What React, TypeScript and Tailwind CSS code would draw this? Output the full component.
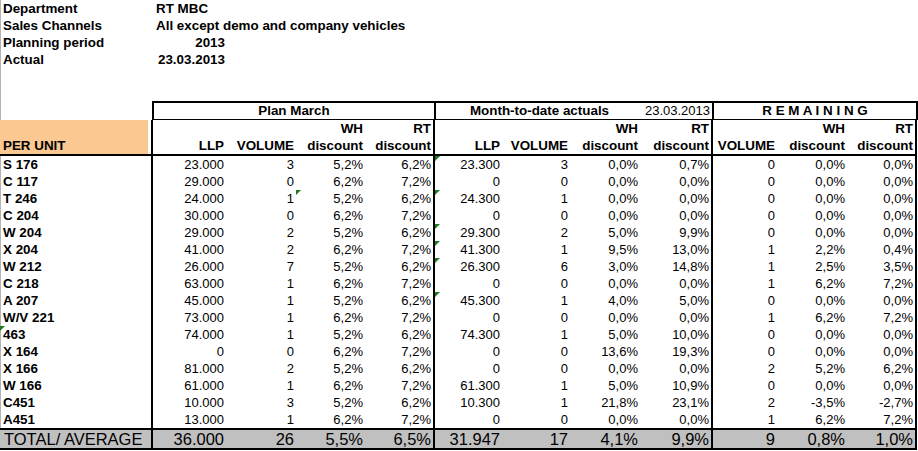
import React from "react";

const COLS =
  "grid grid-cols-[153px_73px_70px_69px_70px_67px_68px_70px_73px_64px_70px_70px] w-[917px]";

const cellBorder = [
  "border-r-2 border-r-black",
  "",
  "",
  "",
  "border-r-2 border-r-black",
  "",
  "",
  "",
  "border-r-2 border-r-black",
  "",
  "",
  "border-r-2 border-r-black",
];

type Row = { label: string; v: string[]; tri?: number[] };

const rows: Row[] = [
  { label: "S 176", v: ["23.000", "3", "5,2%", "6,2%", "23.300", "3", "0,0%", "0,7%", "0", "0,0%", "0,0%"], tri: [5] },
  { label: "C 117", v: ["29.000", "0", "6,2%", "7,2%", "0", "0", "0,0%", "0,0%", "0", "0,0%", "0,0%"] },
  { label: "T 246", v: ["24.000", "1", "5,2%", "6,2%", "24.300", "1", "0,0%", "0,0%", "0", "0,0%", "0,0%"], tri: [3, 5] },
  { label: "C 204", v: ["30.000", "0", "6,2%", "7,2%", "0", "0", "0,0%", "0,0%", "0", "0,0%", "0,0%"] },
  { label: "W 204", v: ["29.000", "2", "5,2%", "6,2%", "29.300", "2", "5,0%", "9,9%", "0", "0,0%", "0,0%"], tri: [5] },
  { label: "X 204", v: ["41.000", "2", "6,2%", "7,2%", "41.300", "1", "9,5%", "13,0%", "1", "2,2%", "0,4%"], tri: [5] },
  { label: "W 212", v: ["26.000", "7", "5,2%", "6,2%", "26.300", "6", "3,0%", "14,8%", "1", "2,5%", "3,5%"], tri: [5] },
  { label: "C 218", v: ["63.000", "1", "6,2%", "7,2%", "0", "0", "0,0%", "0,0%", "1", "6,2%", "7,2%"] },
  { label: "A 207", v: ["45.000", "1", "5,2%", "6,2%", "45.300", "1", "4,0%", "5,0%", "0", "0,0%", "0,0%"], tri: [5] },
  { label: "W/V 221", v: ["73.000", "1", "6,2%", "7,2%", "0", "0", "0,0%", "0,0%", "1", "6,2%", "7,2%"] },
  { label: "463", v: ["74.000", "1", "5,2%", "6,2%", "74.300", "1", "5,0%", "10,0%", "0", "0,0%", "0,0%"], tri: [0] },
  { label: "X 164", v: ["0", "0", "6,2%", "7,2%", "0", "0", "13,6%", "19,3%", "0", "0,0%", "0,0%"] },
  { label: "X 166", v: ["81.000", "2", "5,2%", "6,2%", "0", "0", "0,0%", "0,0%", "2", "5,2%", "6,2%"] },
  { label: "W 166", v: ["61.000", "1", "6,2%", "7,2%", "61.300", "1", "5,0%", "10,9%", "0", "0,0%", "0,0%"] },
  { label: "C451", v: ["10.000", "3", "5,2%", "6,2%", "10.300", "1", "21,8%", "23,1%", "2", "-3,5%", "-2,7%"] },
  { label: "A451", v: ["13.000", "1", "6,2%", "7,2%", "0", "0", "0,0%", "0,0%", "1", "6,2%", "7,2%"] },
];

const total = ["36.000", "26", "5,5%", "6,5%", "31.947", "17", "4,1%", "9,9%", "9", "0,8%", "1,0%"];

function Tri({ left = "left-0" }: { left?: string }) {
  return (
    <span
      className={
        "absolute top-0 w-0 h-0 border-t-[5px] border-r-[5px] border-t-[#1f7a1f] border-r-transparent " + left
      }
    />
  );
}

function InfoRow({ label, value, right }: { label: string; value: string; right?: boolean }) {
  return (
    <div className={COLS + " h-[17px] text-[13.4px]"}>
      <div className="pl-[2px] font-bold leading-[17px] whitespace-nowrap">{label}</div>
      {right ? (
        <div className="text-right pr-[2px] font-bold leading-[17px] whitespace-nowrap">{value}</div>
      ) : (
        <div className="col-span-11 pl-[2px] font-bold leading-[17px] whitespace-nowrap">{value}</div>
      )}
    </div>
  );
}

function HeadCell({ top, bottom, border }: { top?: string; bottom: string; border: string }) {
  return (
    <div className={"flex flex-col justify-end items-end pr-[2px] font-bold text-[13.4px] leading-[17px] " + border}>
      {top ? <div>{top}</div> : null}
      <div>{bottom}</div>
    </div>
  );
}

export default function App() {
  return (
    <div className="w-[918px] h-[451px] bg-white overflow-hidden text-black text-[13px] font-['Liberation_Sans',Arial,sans-serif]">
      <div className="border-l border-l-[#b4b4b4]">
        <InfoRow label="Department" value="RT MBC" />
        <InfoRow label="Sales Channels" value="All except demo and company vehicles" />
        <InfoRow label="Planning period" value="2013" right />
        <InfoRow label="Actual" value="23.03.2013" right />
        <div className="h-[33px]" />
        <div className={COLS + " h-[19px] text-[13.4px]"}>
          <div className="border-r-2 border-r-black" />
          <div className="col-span-4 border-t-2 border-b border-r-2 border-black text-center font-bold leading-[16px]">
            Plan March
          </div>
          <div className="col-span-3 border-t-2 border-b border-black text-center font-bold leading-[16px] pl-[2px]">
            Month-to-date actuals
          </div>
          <div className="border-t-2 border-b border-r-2 border-black text-right pr-[2px] leading-[16px] text-[13px]">
            23.03.2013
          </div>
          <div className="col-span-3 border-t-2 border-b border-r-2 border-black text-center font-bold leading-[16px]">
            R E M A I N I N G
          </div>
        </div>
      </div>

      <div className={COLS + " h-[36px] border-b-2 border-black"}>
        <div className="border-r-2 border-r-black">
          <div className="w-[148px] h-full bg-[#fbc891] flex items-end pl-[3px] font-bold text-[13.4px] leading-[17px]">
            PER UNIT
          </div>
        </div>
        <HeadCell bottom="LLP" border="" />
        <HeadCell bottom="VOLUME" border="" />
        <HeadCell top="WH" bottom="discount" border="" />
        <HeadCell top="RT" bottom="discount" border="border-r-2 border-r-black" />
        <HeadCell bottom="LLP" border="" />
        <HeadCell bottom="VOLUME" border="" />
        <HeadCell top="WH" bottom="discount" border="" />
        <HeadCell top="RT" bottom="discount" border="border-r-2 border-r-black" />
        <HeadCell bottom="VOLUME" border="" />
        <HeadCell top="WH" bottom="discount" border="" />
        <HeadCell top="RT" bottom="discount" border="border-r-2 border-r-black" />
      </div>

      {rows.map((r) => {
        const cells = [r.label, ...r.v];
        return (
          <div key={r.label} className={COLS + " h-[17px]"}>
            {cells.map((c, i) => (
              <div
                key={i}
                className={
                  "relative h-[17px] leading-[17px] whitespace-nowrap " +
                  cellBorder[i] +
                  (i === 0
                    ? " pl-[2px] font-bold text-[13.4px] border-l border-l-[#b4b4b4]"
                    : " text-right pr-[2px]")
                }
              >
                {r.tri && r.tri.includes(i) ? <Tri left={i === 0 ? "-left-px" : "left-0"} /> : null}
                {c}
              </div>
            ))}
          </div>
        );
      })}

      <div className={COLS + " h-[22px] border-t-2 border-b-2 border-black bg-[#c0c0c0] text-[16.5px]"}>
        {["TOTAL/ AVERAGE", ...total].map((c, i) => (
          <div
            key={i}
            className={
              "h-[18px] leading-[18px] whitespace-nowrap " +
              cellBorder[i] +
              (i === 0 ? " pl-[4px]" : " text-right pr-[2px]")
            }
          >
            {c}
          </div>
        ))}
      </div>
    </div>
  );
}
